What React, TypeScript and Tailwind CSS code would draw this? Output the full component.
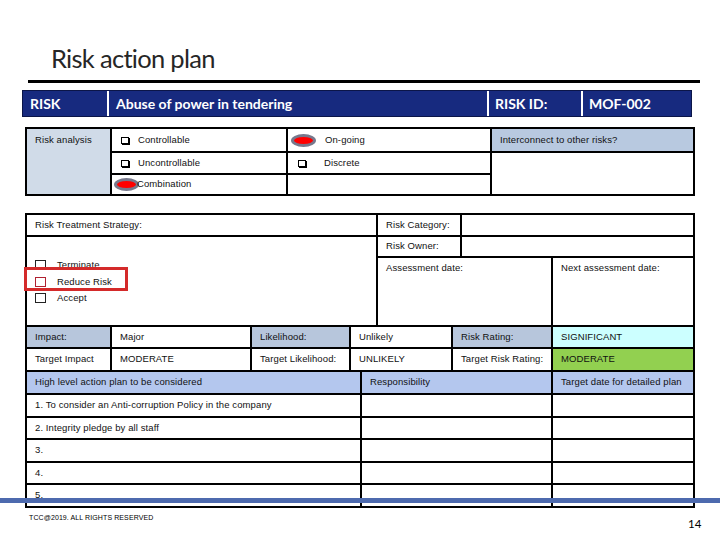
import React from "react";

const cell = "border-2 border-black px-[8px] align-middle whitespace-nowrap";

function Box() {
  return <span className="inline-block w-[8px] h-[7px] border border-black shadow-[1px_1px_0_#000] bg-white shrink-0" />;
}

function Dot() {
  return <span className="inline-block w-[25px] h-[13px] rounded-[50%] bg-[#ff0000] border-[3px] border-[#77788c] shrink-0" />;
}

function Square({ red }: { red?: boolean }) {
  return (
    <span
      className={
        "inline-block w-[11px] h-[10px] border-[1.5px] shrink-0 " +
        (red ? "border-[#b02030]" : "border-[#222]")
      }
    />
  );
}

export default function App() {
  return (
    <div className="relative w-[720px] h-[540px] bg-white overflow-hidden font-['Liberation_Sans',Arial,sans-serif] text-[9.5px] tracking-[0.1px] text-[#111]">
      {/* Title */}
      <div className="h-[80px] pl-[51px] pt-[46px]">
        <h1 className="font-['Lato',sans-serif] text-[25.5px] leading-none tracking-[-0.7px] text-[#262626]">Risk action plan</h1>
      </div>
      <div className="ml-[28px] w-[672px] h-[3px] bg-black" />

      {/* Header bar */}
      <div className="mt-[7px] ml-[22px] w-[670px] h-[27px] flex bg-[#172a7f] border border-[#0b1548] text-white font-['Lato',sans-serif] font-bold text-[14px] tracking-normal">
        <div className="w-[84px] flex items-center pl-[7px]">RISK</div>
        <div className="w-[2px] bg-white" />
        <div className="flex-1 flex items-start pl-[7px] pt-[2px]">Abuse of power in tendering</div>
        <div className="w-[2px] bg-white" />
        <div className="w-[92px] flex items-center pl-[6px]">RISK ID:</div>
        <div className="w-[2px] bg-white" />
        <div className="flex-1 max-w-[108px] flex items-center pl-[6px]">MOF-002</div>
      </div>

      {/* Risk analysis */}
      <table className="mt-[10px] ml-[25px] w-[668px] border-collapse table-fixed">
        <colgroup>
          <col className="w-[85px]" />
          <col className="w-[176px]" />
          <col className="w-[204px]" />
          <col className="w-[203px]" />
        </colgroup>
        <tbody>
          <tr className="h-[24px]">
            <td rowSpan={3} className={cell + " align-top pt-[4px] bg-[#d0dbe8]"}>Risk analysis</td>
            <td className={cell}>
              <div className="flex items-center gap-[9px] pl-[1px]"><Box />Controllable</div>
            </td>
            <td className="border-2 border-black px-[3px]">
              <div className="flex items-center gap-[9px]"><Dot />On-going</div>
            </td>
            <td className={cell + " bg-[#b8c9e0]"}>Interconnect to other risks?</td>
          </tr>
          <tr className="h-[22px]">
            <td className={cell}>
              <div className="flex items-center gap-[9px] pl-[1px]"><Box />Uncontrollable</div>
            </td>
            <td className={cell}>
              <div className="flex items-center gap-[18px] pl-[2px]"><Box />Discrete</div>
            </td>
            <td rowSpan={2} className={cell} />
          </tr>
          <tr className="h-[21px]">
            <td className="border-2 border-black px-[2px]">
              <div className="flex items-center"><Dot /><span className="-ml-[2px]">Combination</span></div>
            </td>
            <td className={cell} />
          </tr>
        </tbody>
      </table>

      {/* Treatment */}
      <table className="mt-[17px] ml-[25px] w-[668px] border-collapse table-fixed">
        <colgroup>
          <col className="w-[351px]" />
          <col className="w-[84px]" />
          <col className="w-[91px]" />
          <col className="w-[142px]" />
        </colgroup>
        <tbody>
          <tr className="h-[22px]">
            <td className={cell}>Risk Treatment Strategy:</td>
            <td className={cell}>Risk Category:</td>
            <td colSpan={2} className={cell} />
          </tr>
          <tr className="h-[21px]">
            <td rowSpan={2} className="border-2 border-black pl-[8px] align-top pt-[23px]">
              <div className="flex flex-col gap-[6.5px] leading-none">
                <div className="flex items-center gap-[11px]"><Square />Terminate</div>
                <div className="flex items-center gap-[11px]"><Square red />Reduce Risk</div>
                <div className="flex items-center gap-[11px]"><Square />Accept</div>
              </div>
            </td>
            <td className={cell}>Risk Owner:</td>
            <td colSpan={2} className={cell} />
          </tr>
          <tr className="h-[69px]">
            <td colSpan={2} className={cell + " align-top pt-[3px]"}>Assessment date:</td>
            <td className={cell + " align-top pt-[3px]"}>Next assessment date:</td>
          </tr>
        </tbody>
      </table>

      {/* Ratings */}
      <table className="-mt-[2px] ml-[25px] w-[668px] border-collapse table-fixed">
        <colgroup>
          <col className="w-[85px]" />
          <col className="w-[140px]" />
          <col className="w-[99px]" />
          <col className="w-[102px]" />
          <col className="w-[100px]" />
          <col className="w-[142px]" />
        </colgroup>
        <tbody>
          <tr className="h-[22px]">
            <td className={cell + " bg-[#b7c6dc]"}>Impact:</td>
            <td className={cell}>Major</td>
            <td className={cell + " bg-[#b7c6dc]"}>Likelihood:</td>
            <td className={cell}>Unlikely</td>
            <td className={cell + " bg-[#b7c6dc]"}>Risk Rating:</td>
            <td className={cell + " bg-[#ccffff]"}>SIGNIFICANT</td>
          </tr>
          <tr className="h-[23px]">
            <td className={cell}>Target Impact</td>
            <td className={cell}>MODERATE</td>
            <td className={cell}>Target Likelihood:</td>
            <td className={cell}>UNLIKELY</td>
            <td className={cell + " px-[6px]"}>Target Risk Rating:</td>
            <td className={cell + " bg-[#92d050]"}>MODERATE</td>
          </tr>
        </tbody>
      </table>

      {/* Action plan */}
      <table className="-mt-[2px] ml-[25px] w-[668px] border-collapse table-fixed">
        <colgroup>
          <col className="w-[335px]" />
          <col className="w-[191px]" />
          <col className="w-[142px]" />
        </colgroup>
        <tbody>
          <tr className="h-[23px] bg-[#b4c7ee]">
            <td className={cell}>High level action plan to be considered</td>
            <td className={cell}>Responsibility</td>
            <td className={cell}>Target date for detailed plan</td>
          </tr>
          {["1. To consider an Anti-corruption Policy in the company", "2.  Integrity pledge by all staff", "3.", "4.", "5."].map((t) => (
            <tr key={t} className="h-[22.5px]">
              <td className={cell}>{t}</td>
              <td className={cell} />
              <td className={cell} />
            </tr>
          ))}
        </tbody>
      </table>

      {/* Overlays */}
      <div className="absolute left-[24px] top-[267px] w-[104px] h-[24px] border-[3px] border-[#d42a2a]" />
      <div className="absolute left-0 top-[498px] w-[720px] h-[5px] bg-[#4d6aae]" />

      {/* Footer */}
      <div className="absolute left-[29px] top-[513px] text-[7px] tracking-[0.1px] text-black">TCC@2019. ALL RIGHTS RESERVED</div>
      <div className="absolute left-[688px] top-[515px] font-['Lato',sans-serif] text-[11.5px] text-black">14</div>
    </div>
  );
}
